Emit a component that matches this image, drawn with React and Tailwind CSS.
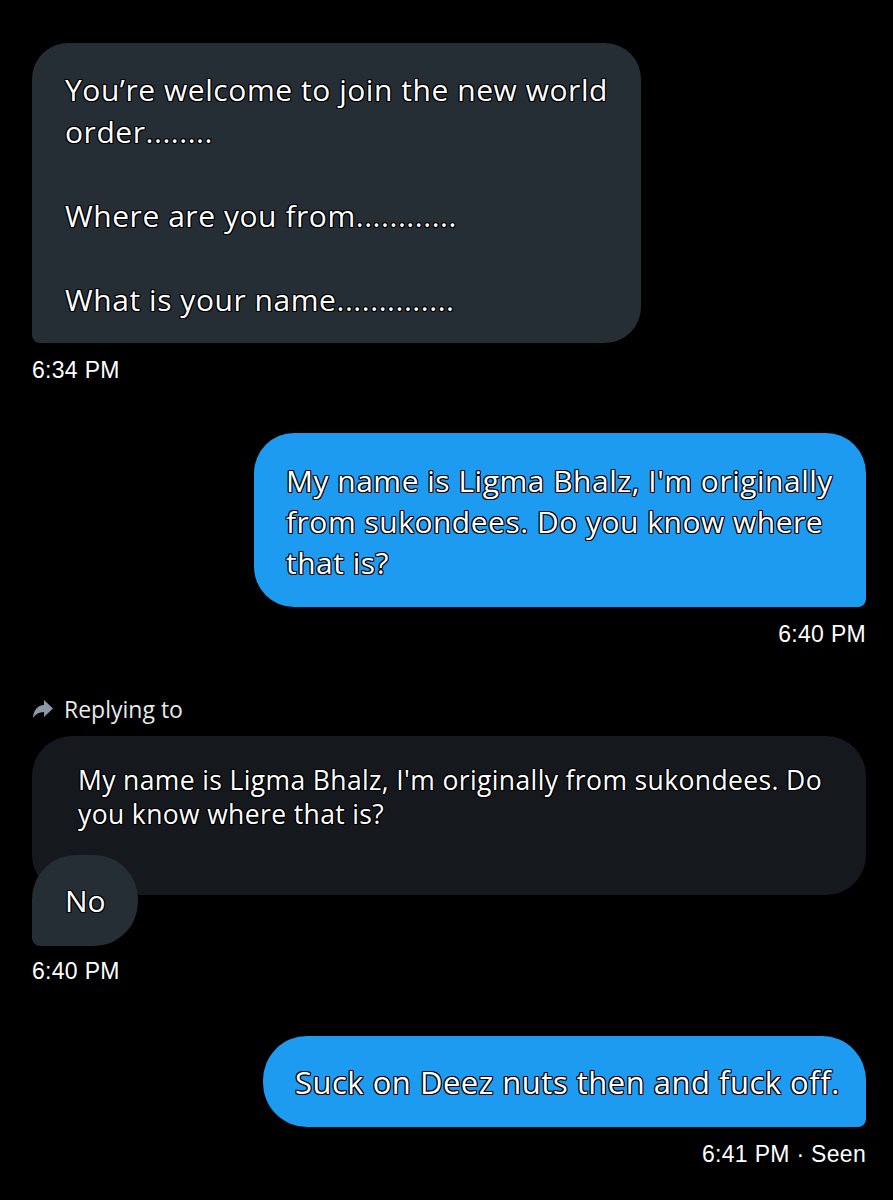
const outline = '[text-shadow:-1px_-1px_0_#000,1px_-1px_0_#000,-1px_1px_0_#000,1px_1px_0_#000,0_1px_0_#000,0_-1px_0_#000,1px_0_0_#000,-1px_0_0_#000]';

function Time({ children, right }) {
    return (
        <div className={`font-['Liberation_Sans',Arial,sans-serif] text-[23px] leading-[26px] tracking-[0.3px] text-white ${right ? 'text-right' : ''}`}>
            {children}
        </div>
    );
}

export default function App() {
    return (
        <div className="min-h-[1200px] w-[893px] bg-black pl-[32px] pr-[27px] pt-[43px] font-['Open_Sans',sans-serif] text-white">
            {/* incoming */}
            <div className="w-[609px] rounded-[36px] rounded-bl-[8px] bg-[#252d35] pl-[33px] pr-[16px] pt-[26px] pb-[22px]">
                <p className={`text-[30px] leading-[42px] tracking-[0.55px] ${outline}`}>
                    You’re welcome to join the new world order........
                    <br />
                    <br />
                    Where are you from............
                    <br />
                    <br />
                    What is your name..............
                </p>
            </div>
            <div className="mt-[14px]">
                <Time>6:34 PM</Time>
            </div>

            {/* outgoing */}
            <div className="mt-[50px] flex justify-end">
                <div className="w-[612px] rounded-[40px] rounded-br-[8px] bg-[#1d9bf0] pl-[32px] pr-[18px] pt-[27px] pb-[24px]">
                    <p className={`text-[30px] leading-[41px] tracking-[0.5px] ${outline}`}>
                        My name is Ligma Bhalz, I'm originally from sukondees. Do you know where that is?
                    </p>
                </div>
            </div>
            <div className="mt-[14px]">
                <Time right>6:40 PM</Time>
            </div>

            {/* reply */}
            <div className="mt-[48px] flex items-center gap-[10px] text-[23px] leading-[28px] text-[#e7e9ea]">
                <svg width="22" height="20" viewBox="0 0 22 20" className="shrink-0">
                    <path d="M12 1 L21 9.5 L12 18 L12 13 C7 13 3.5 15 1 19 C1.5 11 5.5 6.5 12 6 Z" fill="#8b98a5" />
                </svg>
                <span>Replying to</span>
            </div>
            <div className="mt-[13px] flex flex-col">
                <div className="h-[159px] w-[834px] rounded-[40px] bg-[#15191d] pl-[46px] pr-[24px] pt-[27px]">
                    <p className={`text-[26.5px] leading-[34px] tracking-[0.37px] ${outline}`}>
                        My name is Ligma Bhalz, I'm originally from sukondees. Do you know where that is?
                    </p>
                </div>
                <div className="-mt-[40px] flex h-[91px] w-[106px] items-center rounded-[44px] rounded-bl-[8px] bg-[#252d35] pl-[33px]">
                    <span className={`text-[30px] leading-[40px] ${outline}`}>No</span>
                </div>
            </div>
            <div className="mt-[12px]">
                <Time>6:40 PM</Time>
            </div>

            {/* outgoing 2 */}
            <div className="mt-[52px] flex justify-end">
                <div className="flex h-[91px] w-[603px] items-center rounded-[44px] rounded-br-[8px] bg-[#1d9bf0] pl-[32px]">
                    <p className={`text-[31px] leading-[40px] tracking-[0.5px] ${outline}`}>Suck on Deez nuts then and fuck off.</p>
                </div>
            </div>
            <div className="mt-[14px]">
                <Time right>6:41 PM · Seen</Time>
            </div>
        </div>
    );
}
